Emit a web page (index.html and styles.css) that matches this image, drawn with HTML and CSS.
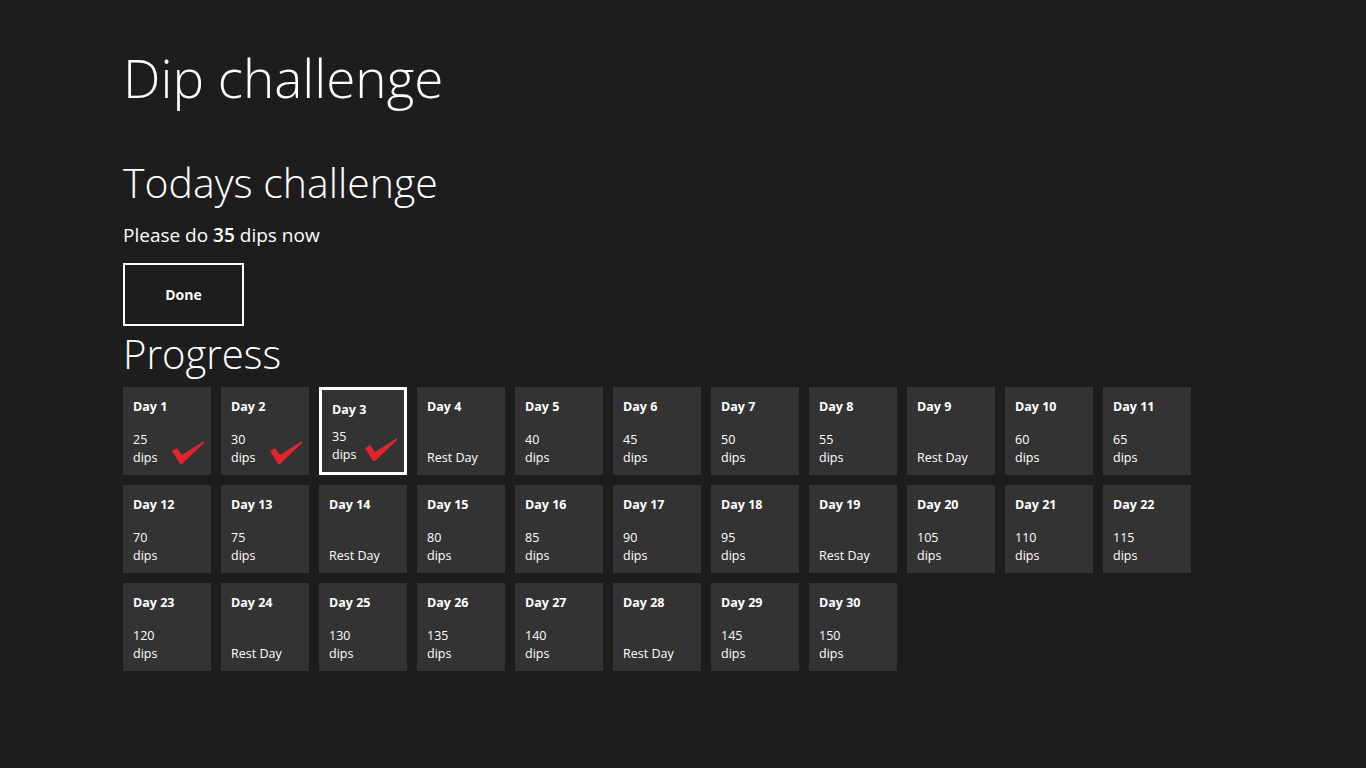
FILE: index.html
```html
<!DOCTYPE html>
<html lang="en">
<head>
<meta charset="utf-8">
<title>Dip challenge</title>
<link rel="stylesheet" href="styles.css">
</head>
<body>
<main class="page">
  <h1 class="page-title">Dip challenge</h1>
  <h2 class="section-title today-title">Todays challenge</h2>
  <p class="instruction">Please do <strong>35</strong> dips now</p>
  <button class="done-btn" type="button">Done</button>
  <h2 class="section-title progress-title">Progress</h2>
  <div class="grid" id="grid"></div>
</main>
<script src="app.js"></script>
</body>
</html>
```
FILE: app.js
```js
(function () {
  var values = [25,30,35,null,40,45,50,55,null,60,65,70,75,null,80,85,90,95,null,105,110,115,120,null,130,135,140,null,145,150];
  var grid = document.getElementById('grid');
  var check = '<svg class="check" width="32" height="24" viewBox="0 0 32 24" aria-hidden="true"><polygon points="0,10 5,7 10,14 32,0 32,2 10,23 8,23" fill="#e0262c"/></svg>';
  values.forEach(function (v, i) {
    var day = i + 1;
    var tile = document.createElement('div');
    tile.className = 'tile' + (day === 3 ? ' current' : '');
    var body = v === null
      ? '<div class="tile-value">Rest Day</div>'
      : '<div class="tile-value">' + v + '<br>dips</div>';
    tile.innerHTML = '<div class="tile-day">Day ' + day + '</div>' + body + (day <= 3 ? check : '');
    grid.appendChild(tile);
  });
})();
```
FILE: styles.css
```css
html, body {
  margin: 0;
  padding: 0;
  background: #1d1d1d;
  color: #ffffff;
  font-family: "Open Sans", "Noto Sans", sans-serif;
}

.page {
  padding: 0 0 0 123px;
}

.page-title {
  margin: 46px 0 0 0;
  font-weight: 300;
  font-size: 53px;
  line-height: 64px;
}

.section-title {
  margin: 0;
  font-weight: 300;
  font-size: 40px;
  line-height: 48px;
}

.today-title {
  margin-top: 48px;
  font-size: 41px;
}

.instruction {
  margin: 15px 0 0 0;
  font-size: 19px;
  line-height: 28px;
  font-weight: 400;
}

.instruction strong {
  font-weight: 600;
}

.done-btn {
  display: block;
  margin-top: 14px;
  width: 121px;
  height: 63px;
  background: transparent;
  border: 2px solid #ffffff;
  color: #ffffff;
  font-family: inherit;
  font-weight: 700;
  font-size: 14px;
  padding: 0;
}

.progress-title {
  margin-top: 4px;
}

.grid {
  margin-top: 9px;
  display: grid;
  grid-template-columns: repeat(11, 88px);
  grid-auto-rows: 88px;
  gap: 10px;
}

.tile {
  position: relative;
  box-sizing: border-box;
  background: #333333;
  padding: 11px 10px 8px 10px;
  display: flex;
  flex-direction: column;
  justify-content: space-between;
  font-size: 12.5px;
  line-height: 18px;
}

.tile.current {
  border: 3px solid #ffffff;
}

.tile-day {
  font-weight: 700;
}

.tile-value {
  font-weight: 400;
}

.check {
  position: absolute;
  right: 7px;
  bottom: 10px;
}
```
